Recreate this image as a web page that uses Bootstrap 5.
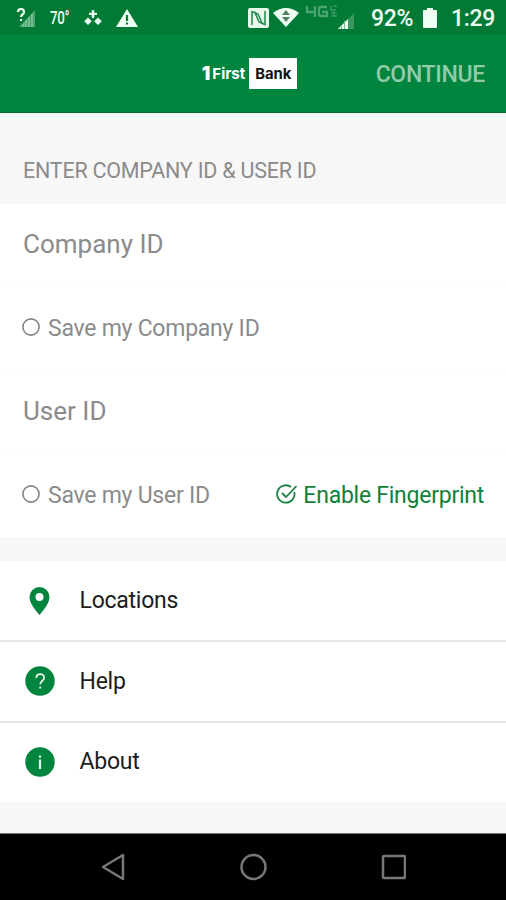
<!DOCTYPE html>
<html lang="en">
<head>
<meta charset="utf-8">
<meta name="viewport" content="width=device-width, initial-scale=1">
<title>1FirstBank</title>
<link href="https://cdn.jsdelivr.net/npm/bootstrap@5.3.0/dist/css/bootstrap.min.css" rel="stylesheet">
<style>
:root{--brand:#00853e;--brand-dark:#007a35;--muted:#8b8b8b}
body{font-family:Roboto,"Liberation Sans",sans-serif;background:#f7f7f7;height:900px;overflow:hidden;line-height:1;color:#1c1c1c}
svg{display:block;flex:none}
.status-bar{height:35px;background:var(--brand-dark);color:#eefbf0;padding:0 11px 0 16px}
.temp{font-size:18px;font-weight:500;letter-spacing:-.4px;width:24px;margin-left:14px;transform:scaleX(.74);transform-origin:left}
.alert-icon{margin-left:12px;margin-right:1px}
.wifi{margin:0 3px 0 4px}
.stat{font-size:23px;font-weight:500;letter-spacing:-.35px;padding-top:1px;white-space:nowrap}
.pct{margin-left:15px}
.batt{margin:0 14px 0 10px}
.app-bar{height:78px;background:var(--brand);border-bottom:1px solid #00702c;display:grid;grid-template-columns:1fr auto 1fr;padding:0 21px 0 14px}
.logo-first{font:700 15px Inter,sans-serif;margin-left:2px}
.logo-one{font:900 19px/1 Inter,sans-serif;margin-top:-1px}
.logo-box{width:48px;height:31px;background:#fff;color:#111;font:700 14.800px Inter,sans-serif}
.continue{font-size:23px;letter-spacing:-.3px;font-weight:500;color:#92cba9;padding-top:2px}
.section-title{height:91px;padding:24px 23px 0;font-size:21.500px;letter-spacing:-.23px;color:var(--muted)}
.field-row{height:80px;padding:0 22px 0 23px;background:#fff;color:var(--muted);border-bottom:1px solid #fcfcfc}
.save-row{height:87px;padding-top:2px;padding-left:22px}
.field-name{font-size:26px}
.opt{font-size:23px;letter-spacing:-.25px;gap:8px}
.opt svg{margin-top:-2px}
.finger{color:#128038;gap:6px}
.menu{margin-top:23px}
.menu-item{height:80.500px;background:#fff;padding:0 25px;border-bottom:2px solid #e6e6e6;font-size:23px;letter-spacing:-.25px}
.menu-item:first-child{height:81px}
.menu-item:last-child{border-bottom-color:#fbfbfb}
.menu-icon{width:54.500px}
.sys-nav{height:67px;background:#000;border-top:1px solid #777}
</style>
</head>
<body class="d-flex flex-column">
<header>
  <div class="status-bar d-flex align-items-center">
    <svg width="20" height="22" viewBox="0 0 20 22"><path d="M3 20 19 3v17z" fill="#4fa571"/><path d="M7 17v3M10 13v7M13 10v10M16 7v13" stroke="#9bd0ae"/><path d="M2 5q0-3 3-3t3 3q0 1.500-1.500 2.500T5 10M5 12v2" fill="none" stroke="#f4fff6" stroke-width="2.200"/></svg>
    <span class="temp">70°</span>
    <svg class="ms-2" width="22" height="20" viewBox="0 0 22 20" fill="#e9fbee"><path d="M9.800 2h2.400v2.700H15v2.400h-2.800V10H9.800V7.100H7V4.700h2.800zM6 9.500l3.800 3.700L6 17l-3.800-3.800zM16 9.500l3.800 3.700L16 17l-3.800-3.800z"/></svg>
    <svg class="alert-icon" width="22" height="20" viewBox="0 0 22 20"><path d="M11 1 22 19H0z" fill="#f0fff3"/><path d="M11 7v6M11 14.500v2" stroke="#007a35" stroke-width="2.200"/></svg>
    <svg class="ms-auto" width="21" height="20" viewBox="0 0 21 20"><rect width="21" height="20" rx="2" fill="#e7faeb"/><path d="M4 17V3.500L10 6l4.500 10M6.500 3.500 11 14l6 2.500V3" fill="none" stroke="#24864d" stroke-width="1.500"/></svg>
    <svg class="wifi" width="26" height="21" viewBox="0 0 26 21"><path d="M0 6Q13-4 26 6L13 20z" fill="#f0fff3"/><path d="m9 8 4-5 4 5zM9 10h8l-4 5z" fill="#54806a"/></svg>
    <svg width="54" height="28" viewBox="0 0 54 28"><path d="M5 2v6h8M13 2v11M25 3h-6q-2 0-2 2v5q0 2 2 2h6v-4h-5" fill="none" stroke="#4ba36f" stroke-width="2.300"/><path d="M29 2v4h5M35 2h-4M29 9h6M29 12h6M32 7v6" fill="none" stroke="#39965f" stroke-width="1.500"/><path d="M36 25 52 9v16z" fill="#3b9661"/><path d="M36 25l10-10v10z" fill="#e7faeb"/><path d="M39.500 21v4M42.500 17v8" stroke="#82bd98"/></svg>
    <span class="stat pct">92%</span>
    <svg class="batt" width="14" height="20" viewBox="0 0 14 20" fill="#f0fff3"><path d="M4 0h6v2h3q1 0 1 1v16q0 1-1 1H1q-1 0-1-1V3q0-1 1-1h3z"/></svg>
    <span class="stat clock">1:29</span>
  </div>
  <div class="app-bar align-items-center">
    <span></span>
    <div class="d-flex align-items-center text-white"><span class="logo-one">1</span><span class="logo-first">First</span><span class="logo-box d-flex align-items-center justify-content-center ms-1">Bank</span></div>
    <span class="continue text-end">CONTINUE</span>
  </div>
</header>
<main>
  <div class="section-title d-flex align-items-center"><span>ENTER COMPANY ID &amp; USER ID</span></div>
  <div class="field-row d-flex align-items-center"><span class="field-name">Company ID</span></div>
  <div class="field-row save-row d-flex align-items-center"><span class="opt d-flex align-items-center"><svg width="18" height="20" viewBox="-1 0 20 20"><circle cx="9" cy="10" r="9" fill="none" stroke="#858585" stroke-width="1.800"/></svg><span>Save my Company ID</span></span></div>
  <div class="field-row d-flex align-items-center"><span class="field-name">User ID</span></div>
  <div class="field-row save-row d-flex align-items-center justify-content-between"><span class="opt d-flex align-items-center"><svg width="18" height="20" viewBox="-1 0 20 20"><circle cx="9" cy="10" r="9" fill="none" stroke="#858585" stroke-width="1.800"/></svg><span>Save my User ID</span></span>
    <span class="opt finger d-flex align-items-center"><svg width="21" height="21" viewBox="0 0 21 21" fill="none" stroke="#188344" stroke-width="1.800"><path d="M15 3A8.700 8.700 0 1 0 18.300 8M6 9l4 4L20.500 2"/></svg><span>Enable Fingerprint</span></span></div>
  <div class="menu">
    <div class="menu-item d-flex align-items-center"><span class="menu-icon"><svg width="30" height="30" viewBox="0 0 30 30"><path fill="#00853e" fill-rule="evenodd" d="M14.500 1A10 10 0 0 0 4.500 11c0 6 5 12 10 18 5-6 10-12 10-18a10 10 0 0 0-10-10zm0 6a4 4 0 1 1 0 8 4 4 0 0 1 0-8z"/></svg></span><span>Locations</span></div>
    <div class="menu-item d-flex align-items-center"><span class="menu-icon"><svg width="30" height="30" viewBox="0 0 30 30"><circle cx="15" cy="15" r="14.700" fill="#00853e"/><path d="M11.300 12q0-3.800 3.900-3.800t3.900 3.500q0 1.600-1.700 3T15.200 18.300M15.200 20.500v2" fill="none" stroke="#e6f5eb" stroke-width="1.800"/></svg></span><span>Help</span></div>
    <div class="menu-item d-flex align-items-center"><span class="menu-icon"><svg width="30" height="30" viewBox="0 0 30 30"><circle cx="15" cy="15" r="14.700" fill="#00853e"/><path d="M15 12.500v9.500M15 8.500v2.300" stroke="#e6f5eb" stroke-width="2.200"/></svg></span><span>About</span></div>
  </div>
</main>
<footer class="sys-nav mt-auto d-flex justify-content-center align-items-center">
  <svg width="306" height="30" viewBox="-3 0 306 30" fill="none" stroke="#777" stroke-width="2.500" stroke-linejoin="round"><path d="M20 3v24L0 15z"/><circle cx="150.500" cy="15" r="12"/><rect x="280" y="4" width="22" height="22" rx="1"/></svg>
</footer>
<script src="https://cdn.jsdelivr.net/npm/bootstrap@5.3.0/dist/js/bootstrap.bundle.min.js"></script>
</body>
</html>
